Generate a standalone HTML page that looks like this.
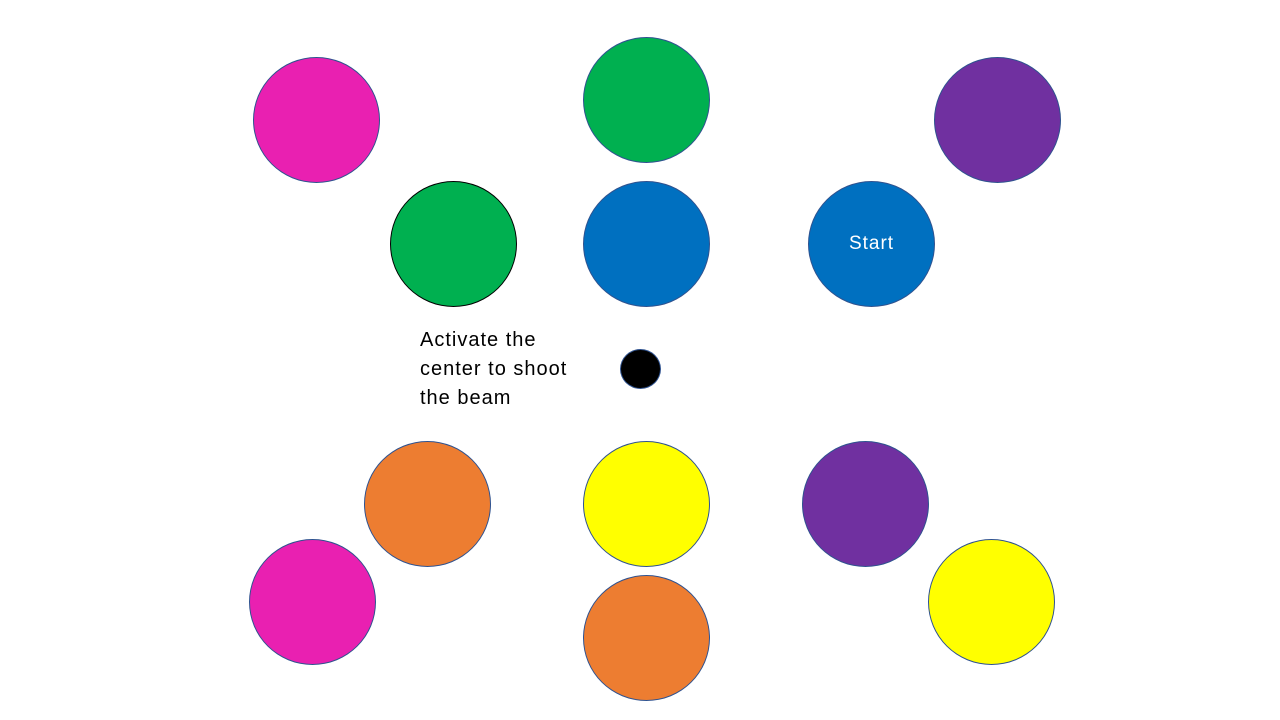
<!DOCTYPE html>
<html><head><meta charset="utf-8"><style>
html,body{margin:0;padding:0;width:1280px;height:720px;background:#fff;overflow:hidden;position:relative;font-family:"Liberation Sans",sans-serif}
.c{position:absolute;border-radius:50%;box-sizing:border-box;border:1px solid #2F528F;width:127px;height:126px}
.t{position:absolute;left:420px;top:326px;font-size:20px;letter-spacing:1px;line-height:29px;color:#000}
.s{display:flex;align-items:center;justify-content:center;color:#fff;font-size:19px;letter-spacing:1px}
</style></head><body>
<div class="c" style="left:253px;top:57px;background:#E920B1"></div>
<div class="c" style="left:583px;top:37px;background:#00B050"></div>
<div class="c" style="left:934px;top:57px;background:#7030A0"></div>
<div class="c" style="left:390px;top:181px;background:#00B050;border-color:#000"></div>
<div class="c" style="left:583px;top:181px;background:#0070C0"></div>
<div class="c s" style="left:808px;top:181px;background:#0070C0">Start</div>
<div class="c" style="left:620px;top:349px;width:41px;height:40px;background:#000"></div>
<div class="c" style="left:364px;top:441px;background:#ED7D31"></div>
<div class="c" style="left:583px;top:441px;background:#FFFF00"></div>
<div class="c" style="left:802px;top:441px;background:#7030A0"></div>
<div class="c" style="left:249px;top:539px;background:#E920B1"></div>
<div class="c" style="left:583px;top:575px;background:#ED7D31"></div>
<div class="c" style="left:928px;top:539px;background:#FFFF00"></div>
<div class="t">Activate the<br>center to shoot<br>the beam</div>
</body></html>
